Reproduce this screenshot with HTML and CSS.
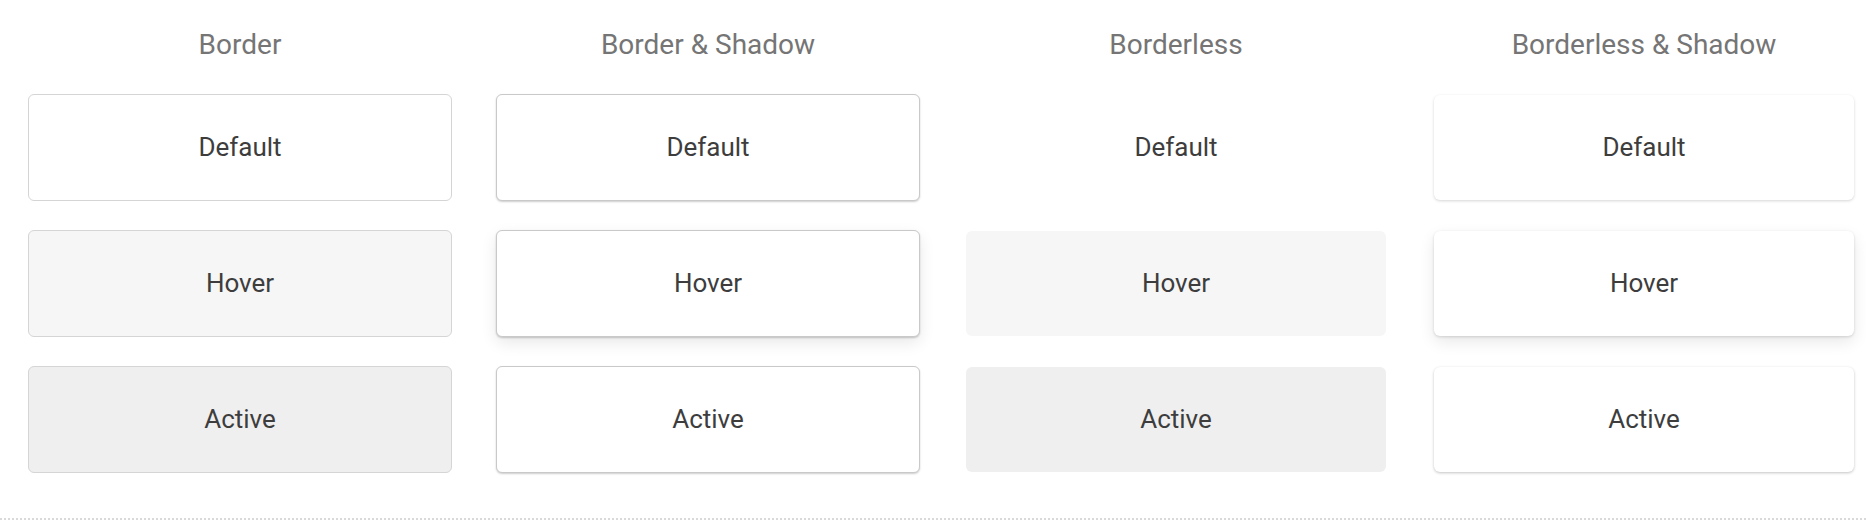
FILE: index.html
```html
<!DOCTYPE html>
<html lang="en">
<head>
<meta charset="utf-8">
<title>Button styles</title>
<link rel="stylesheet" href="styles.css">
</head>
<body>
<section class="showcase">
  <div class="column">
    <h2 class="column-title">Border</h2>
    <div class="btn btn-border">Default</div>
    <div class="btn btn-border is-hover">Hover</div>
    <div class="btn btn-border is-active">Active</div>
  </div>
  <div class="column">
    <h2 class="column-title">Border &amp; Shadow</h2>
    <div class="btn btn-border-shadow">Default</div>
    <div class="btn btn-border-shadow is-hover">Hover</div>
    <div class="btn btn-border-shadow is-active">Active</div>
  </div>
  <div class="column">
    <h2 class="column-title">Borderless</h2>
    <div class="btn btn-borderless">Default</div>
    <div class="btn btn-borderless is-hover">Hover</div>
    <div class="btn btn-borderless is-active">Active</div>
  </div>
  <div class="column">
    <h2 class="column-title">Borderless &amp; Shadow</h2>
    <div class="btn btn-borderless-shadow">Default</div>
    <div class="btn btn-borderless-shadow is-hover">Hover</div>
    <div class="btn btn-borderless-shadow is-active">Active</div>
  </div>
</section>
<hr class="divider">
</body>
</html>
```

FILE: styles.css
```css
html, body {
  margin: 0;
  padding: 0;
  background: #ffffff;
}

body {
  font-family: Roboto, "Noto Sans", "Liberation Sans", sans-serif;
  overflow: hidden;
}

.showcase {
  display: grid;
  grid-template-columns: repeat(4, 424px);
  column-gap: 44px;
  padding: 29px 0 0 28px;
}

.column {
  display: flex;
  flex-direction: column;
  gap: 29px;
}

.column-title {
  margin: 0 0 4px;
  font-weight: 400;
  font-size: 28px;
  line-height: 32px;
  color: #757575;
  text-align: center;
}

.btn {
  box-sizing: border-box;
  height: 107px;
  padding-bottom: 2px;
  display: flex;
  align-items: center;
  justify-content: center;
  font-size: 26px;
  color: #3d3d3d;
  border-radius: 6px;
  background: #ffffff;
}

/* Border */
.btn-border {
  border: 1px solid #d5d5d5;
}
.btn-border.is-hover {
  background: #f6f6f6;
}
.btn-border.is-active {
  background: #efefef;
}

/* Border & Shadow */
.btn-border-shadow {
  border: 1px solid #c9c9c9;
  box-shadow: 0 1px 2px rgba(0, 0, 0, 0.2);
}
.btn-border-shadow.is-hover {
  box-shadow: 0 1px 2px rgba(0, 0, 0, 0.2), 0 6px 16px rgba(0, 0, 0, 0.09);
}

/* Borderless */
.btn-borderless {
  margin: 1px 2px;
  height: 105px;
}
.btn-borderless.is-hover {
  background: #f6f6f6;
}
.btn-borderless.is-active {
  background: #efefef;
}

/* Borderless & Shadow */
.btn-borderless-shadow {
  margin: 1px 2px;
  height: 105px;
  box-shadow: 0 1px 3px rgba(0, 0, 0, 0.17);
}
.btn-borderless-shadow.is-hover {
  box-shadow: 0 1px 3px rgba(0, 0, 0, 0.15), 0 6px 16px rgba(0, 0, 0, 0.09);
}
.btn-borderless-shadow.is-active {
  box-shadow: 0 1px 3px rgba(0, 0, 0, 0.24);
}

.divider {
  margin: 45px 0 0;
  border: 0;
  border-top: 2px dotted #d9d9d9;
  height: 0;
}
```
